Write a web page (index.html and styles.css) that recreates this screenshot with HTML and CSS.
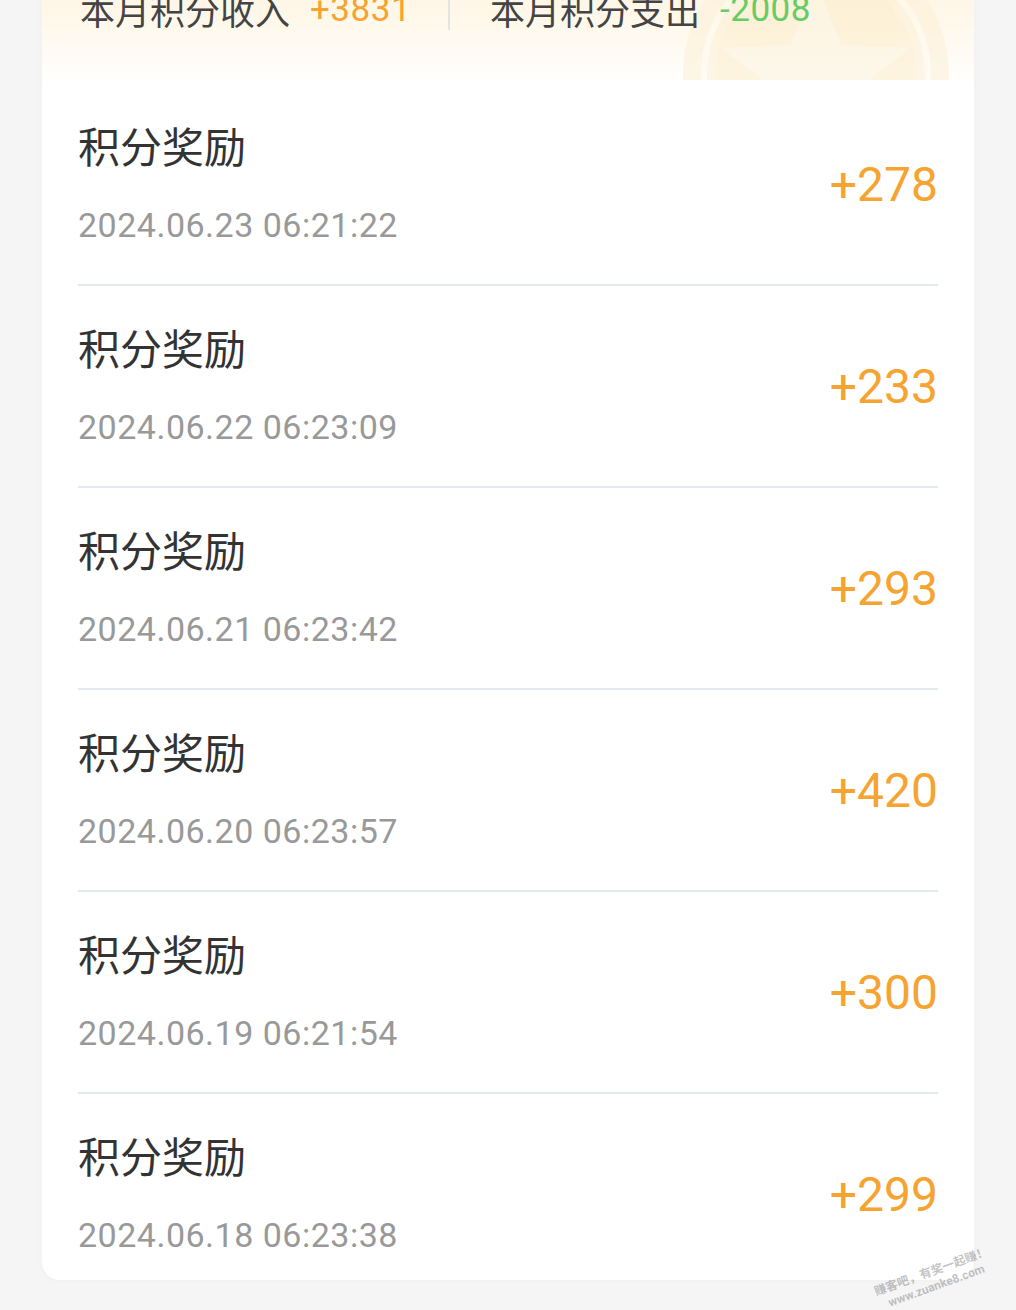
FILE: index.html
```html
<!DOCTYPE html>
<html lang="zh-CN">
<head>
    <meta charset="UTF-8">
    <meta name="viewport" content="width=device-width, initial-scale=1.0">
    <title>积分明细</title>
    <link rel="stylesheet" href="styles.css">
</head>
<body>

<div class="page">
    <div class="card">
        <div class="summary">
            <div class="badge-art">
                <svg viewBox="0 0 266 266" width="266" height="266">
                    <circle cx="133" cy="133" r="133" fill="#fdf0d6"/>
                    <circle cx="133" cy="133" r="112" fill="none" stroke="#fffaf0" stroke-width="6"/>
                    <circle cx="133" cy="133" r="100" fill="#fcecc9"/>
                    <polygon points="133,40 158,105 228,108 173,150 192,218 133,178 74,218 93,150 38,108 108,105" fill="#fdf3de"/>
                </svg>
            </div>
            <div class="stats">
                <div class="stat">
                    <span class="stat-label">本月积分收入</span>
                    <span class="stat-value income">+3831</span>
                </div>
                <div class="stat-divider"></div>
                <div class="stat">
                    <span class="stat-label">本月积分支出</span>
                    <span class="stat-value expense">-2008</span>
                </div>
            </div>
        </div>

        <ul class="records">
            <li class="record">
                <div class="record-info">
                    <div class="record-title">积分奖励</div>
                    <div class="record-time">2024.06.23 06:21:22</div>
                </div>
                <div class="record-amount">+278</div>
            </li>
            <li class="record">
                <div class="record-info">
                    <div class="record-title">积分奖励</div>
                    <div class="record-time">2024.06.22 06:23:09</div>
                </div>
                <div class="record-amount">+233</div>
            </li>
            <li class="record">
                <div class="record-info">
                    <div class="record-title">积分奖励</div>
                    <div class="record-time">2024.06.21 06:23:42</div>
                </div>
                <div class="record-amount">+293</div>
            </li>
            <li class="record">
                <div class="record-info">
                    <div class="record-title">积分奖励</div>
                    <div class="record-time">2024.06.20 06:23:57</div>
                </div>
                <div class="record-amount">+420</div>
            </li>
            <li class="record">
                <div class="record-info">
                    <div class="record-title">积分奖励</div>
                    <div class="record-time">2024.06.19 06:21:54</div>
                </div>
                <div class="record-amount">+300</div>
            </li>
            <li class="record">
                <div class="record-info">
                    <div class="record-title">积分奖励</div>
                    <div class="record-time">2024.06.18 06:23:38</div>
                </div>
                <div class="record-amount">+299</div>
            </li>
        </ul>
    </div>

    <div class="watermark">
        <span>赚客吧，有奖一起赚！</span>
        <span>www.zuanke8.com</span>
    </div>
</div>

</body>
</html>
```

FILE: styles.css
```css
body {
    margin: 0;
    background-color: #f5f5f5;
    font-family: Roboto, "Noto Sans CJK SC", sans-serif;
}
.page {
    position: relative;
    padding: 0 42px 30px;
}
.card {
    margin-top: -60px;
    background-color: #ffffff;
    border-radius: 0 0 18px 18px;
    box-shadow: 0 0 6px rgba(0, 0, 0, 0.03);
    overflow: hidden;
}
.summary {
    position: relative;
    height: 144px;
    background: linear-gradient(180deg, #fdf1d8 0%, #fffaf0 70%, #ffffff 100%);
    overflow: hidden;
}
.badge-art {
    position: absolute;
    left: 641px;
    bottom: 4px;
    width: 266px;
    height: 140px;
    overflow: hidden;
    opacity: 0.55;
}
.badge-art svg {
    display: block;
}
.stats {
    position: relative;
    display: flex;
    align-items: center;
    padding: 50px 36px 0 38px;
}
.stat {
    display: flex;
    align-items: center;
    font-size: 35px;
    line-height: 40px;
}
.stat-label {
    color: #444;
    font-family: "Noto Sans CJK SC", sans-serif;
}
.stat-value {
    margin-left: 20px;
    letter-spacing: 0.5px;
}
.income {
    color: #f5a431;
}
.expense {
    color: #66cc66;
}
.stat-divider {
    width: 2px;
    height: 40px;
    margin: 0 40px 0 37px;
    background-color: #e4e4e4;
}
.records {
    list-style: none;
    margin: 0;
    padding: 0;
}
.record {
    display: flex;
    justify-content: space-between;
    align-items: center;
    margin: 0 36px;
    padding: 36px 0 40px;
    border-bottom: 2px solid #e4e9ef;
}
.record:last-child {
    padding-bottom: 26px;
    border-bottom: none;
}
.record-title {
    font-family: "Noto Sans CJK SC", sans-serif;
    font-size: 42px;
    line-height: 49px;
    color: #333;
}
.record-time {
    margin-top: 37px;
    font-size: 34px;
    line-height: 38px;
    letter-spacing: 0.5px;
    color: #999;
}
.record-amount {
    padding-top: 5px;
    font-size: 48px;
    color: #f5a431;
}
.watermark {
    position: absolute;
    right: 22px;
    bottom: 16px;
    display: flex;
    flex-direction: column;
    align-items: center;
    font-size: 12px;
    line-height: 15px;
    font-weight: bold;
    color: rgba(120, 120, 120, 0.45);
    transform: rotate(-20deg);
}
```
